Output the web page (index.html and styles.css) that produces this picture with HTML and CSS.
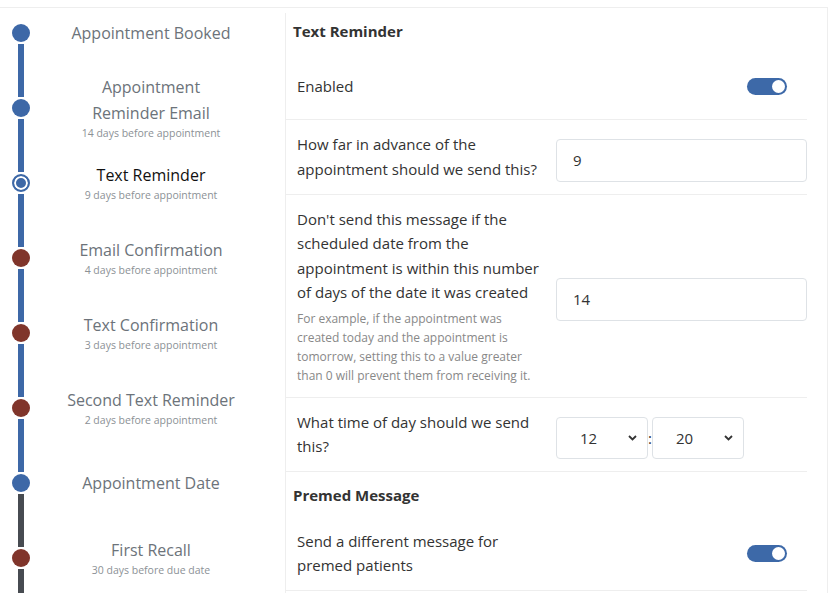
FILE: index.html
```html
<!DOCTYPE html>
<html>
  <head>
    <meta charset="utf-8" />
    <title>Appointment reminders</title>
    <link rel="stylesheet" href="styles.css">
  </head>

  <body>
    <div class="card">
      <ol class="timeline">
        <li class="step">
          <div class="marker"><span class="seg hidden"></span><span class="dot"></span><span class="seg"></span></div>
          <div class="step-text single">
            <div class="step-title">Appointment Booked</div>
          </div>
        </li>
        <li class="step">
          <div class="marker"><span class="seg"></span><span class="dot"></span><span class="seg"></span></div>
          <div class="step-text">
            <div class="step-title">Appointment<br>Reminder Email</div>
            <div class="step-sub">14 days before appointment</div>
          </div>
        </li>
        <li class="step active">
          <div class="marker"><span class="seg"></span><span class="dot ring"></span><span class="seg"></span></div>
          <div class="step-text">
            <div class="step-title">Text Reminder</div>
            <div class="step-sub">9 days before appointment</div>
          </div>
        </li>
        <li class="step">
          <div class="marker"><span class="seg"></span><span class="dot later"></span><span class="seg"></span></div>
          <div class="step-text">
            <div class="step-title">Email Confirmation</div>
            <div class="step-sub">4 days before appointment</div>
          </div>
        </li>
        <li class="step">
          <div class="marker"><span class="seg"></span><span class="dot later"></span><span class="seg"></span></div>
          <div class="step-text">
            <div class="step-title">Text Confirmation</div>
            <div class="step-sub">3 days before appointment</div>
          </div>
        </li>
        <li class="step">
          <div class="marker"><span class="seg"></span><span class="dot later"></span><span class="seg"></span></div>
          <div class="step-text">
            <div class="step-title">Second Text Reminder</div>
            <div class="step-sub">2 days before appointment</div>
          </div>
        </li>
        <li class="step">
          <div class="marker"><span class="seg"></span><span class="dot"></span><span class="seg dark"></span></div>
          <div class="step-text single">
            <div class="step-title">Appointment Date</div>
          </div>
        </li>
        <li class="step">
          <div class="marker"><span class="seg dark"></span><span class="dot later"></span><span class="seg dark"></span></div>
          <div class="step-text">
            <div class="step-title">First Recall</div>
            <div class="step-sub">30 days before due date</div>
          </div>
        </li>
      </ol>

      <div class="settings">
        <h3 class="section-title">Text Reminder</h3>

        <div class="setting-row roomy">
          <div class="label">Enabled</div>
          <div class="switch"><span class="knob"></span></div>
        </div>

        <div class="setting-row">
          <label class="label" for="advance">How far in advance of the appointment should we send this?</label>
          <input class="field" type="text" id="advance" name="advance" value="9" />
        </div>

        <div class="setting-row">
          <div>
            <label class="label" for="mindays">Don't send this message if the scheduled date from the appointment is within this number of days of the date it was created</label>
            <div class="help">For example, if the appointment was created today and the appointment is tomorrow, setting this to a value greater than 0 will prevent them from receiving it.</div>
          </div>
          <input class="field" type="text" id="mindays" name="mindays" value="14" />
        </div>

        <div class="setting-row">
          <div class="label">What time of day should we send this?</div>
          <div class="time">
            <div class="select">
              <span>12</span>
              <svg width="9" height="6" viewBox="0 0 9 6"><path d="M1 1 L4.5 4.5 L8 1" fill="none" stroke="#333" stroke-width="1.8"/></svg>
            </div>
            <span class="colon">:</span>
            <div class="select">
              <span>20</span>
              <svg width="9" height="6" viewBox="0 0 9 6"><path d="M1 1 L4.5 4.5 L8 1" fill="none" stroke="#333" stroke-width="1.8"/></svg>
            </div>
          </div>
        </div>

        <h3 class="section-title">Premed Message</h3>

        <div class="setting-row">
          <div class="label">Send a different message for premed patients</div>
          <div class="switch"><span class="knob"></span></div>
        </div>
      </div>
    </div>
  </body>
</html>
```

FILE: styles.css
```css
body {
  margin: 0;
  font-family: "Open Sans", "Segoe UI", sans-serif;
  color: #333;
  background: #fff;
}

.card {
  display: flex;
  width: 827px;
  margin-top: 7px;
  border-top: 1px solid #eee;
  border-right: 1px solid #eee;
}

/* timeline on the left */
.timeline {
  flex: 0 0 285px;
  list-style: none;
  margin: -13px 0 0;
  padding: 0;
}

.step {
  display: grid;
  grid-template-columns: 18px 1fr;
  height: 75px;
  padding-left: 12px;
}

.marker {
  display: flex;
  flex-direction: column;
  align-items: center;
}

.seg {
  flex: 1;
  width: 6px;
  background: #3d68a7;
}

.seg.dark {
  background: #474b51;
}

.seg.hidden {
  visibility: hidden;
}

.dot {
  width: 18px;
  height: 18px;
  margin: 2px 0;
  border-radius: 50%;
  background: #3d68a7;
  box-sizing: border-box;
}

.dot.later {
  background: #80352b;
}

.dot.ring {
  border: 2px solid #3d68a7;
  box-shadow: inset 0 0 0 2px #fff;
}

.step-text {
  align-self: center;
  text-align: center;
  padding-right: 13px;
}

.step-text.single {
  padding-top: 3px;
}

.step-title {
  font-size: 16px;
  line-height: 25.5px;
  color: #6c737a;
}

.active .step-title {
  color: #111;
}

.step-sub {
  font-size: 10.5px;
  line-height: 14px;
  color: #8c9196;
}

/* settings panel */
.settings {
  flex: 1;
  margin-top: 5px;
  padding-right: 20px;
  border-left: 1px solid #eee;
}

.section-title {
  margin: 0 0 10px;
  padding: 11px 7px 0;
  font-size: 15px;
  line-height: 24px;
  font-weight: 700;
  color: #333;
}

.section-title:first-child {
  padding-top: 6px;
}

.setting-row {
  display: grid;
  grid-template-columns: 248px 251px;
  column-gap: 11px;
  align-items: center;
  padding: 12px 0 12px 11px;
  border-bottom: 1px solid #eee;
}

.setting-row.roomy {
  padding-top: 21px;
  padding-bottom: 20px;
}

.label {
  display: block;
  font-size: 15px;
  line-height: 24.5px;
  color: #333;
}

.help {
  margin-top: 4px;
  font-size: 12px;
  line-height: 19px;
  color: #888;
}

.field {
  width: 100%;
  height: 43px;
  margin: 7px 0 0;
  padding: 0 16px;
  border: 1px solid #dee2e6;
  border-radius: 4px;
  font-family: inherit;
  font-size: 15px;
  color: #333;
  box-sizing: border-box;
}

.switch {
  justify-self: end;
  display: flex;
  justify-content: flex-end;
  align-items: center;
  width: 40px;
  height: 17px;
  margin-right: 20px;
  padding: 0 2px;
  border-radius: 9px;
  background: #3d69a8;
  box-sizing: border-box;
}

.knob {
  width: 13px;
  height: 13px;
  border-radius: 50%;
  background: #fff;
}

.time {
  display: flex;
  align-items: center;
  margin-top: 7px;
}

.select {
  display: flex;
  align-items: center;
  justify-content: space-between;
  width: 92px;
  height: 42px;
  padding: 0 10px 0 23px;
  border: 1px solid #dee2e6;
  border-radius: 4px;
  font-size: 15px;
  box-sizing: border-box;
}

.colon {
  width: 4px;
  text-align: center;
  font-size: 15px;
}
```
